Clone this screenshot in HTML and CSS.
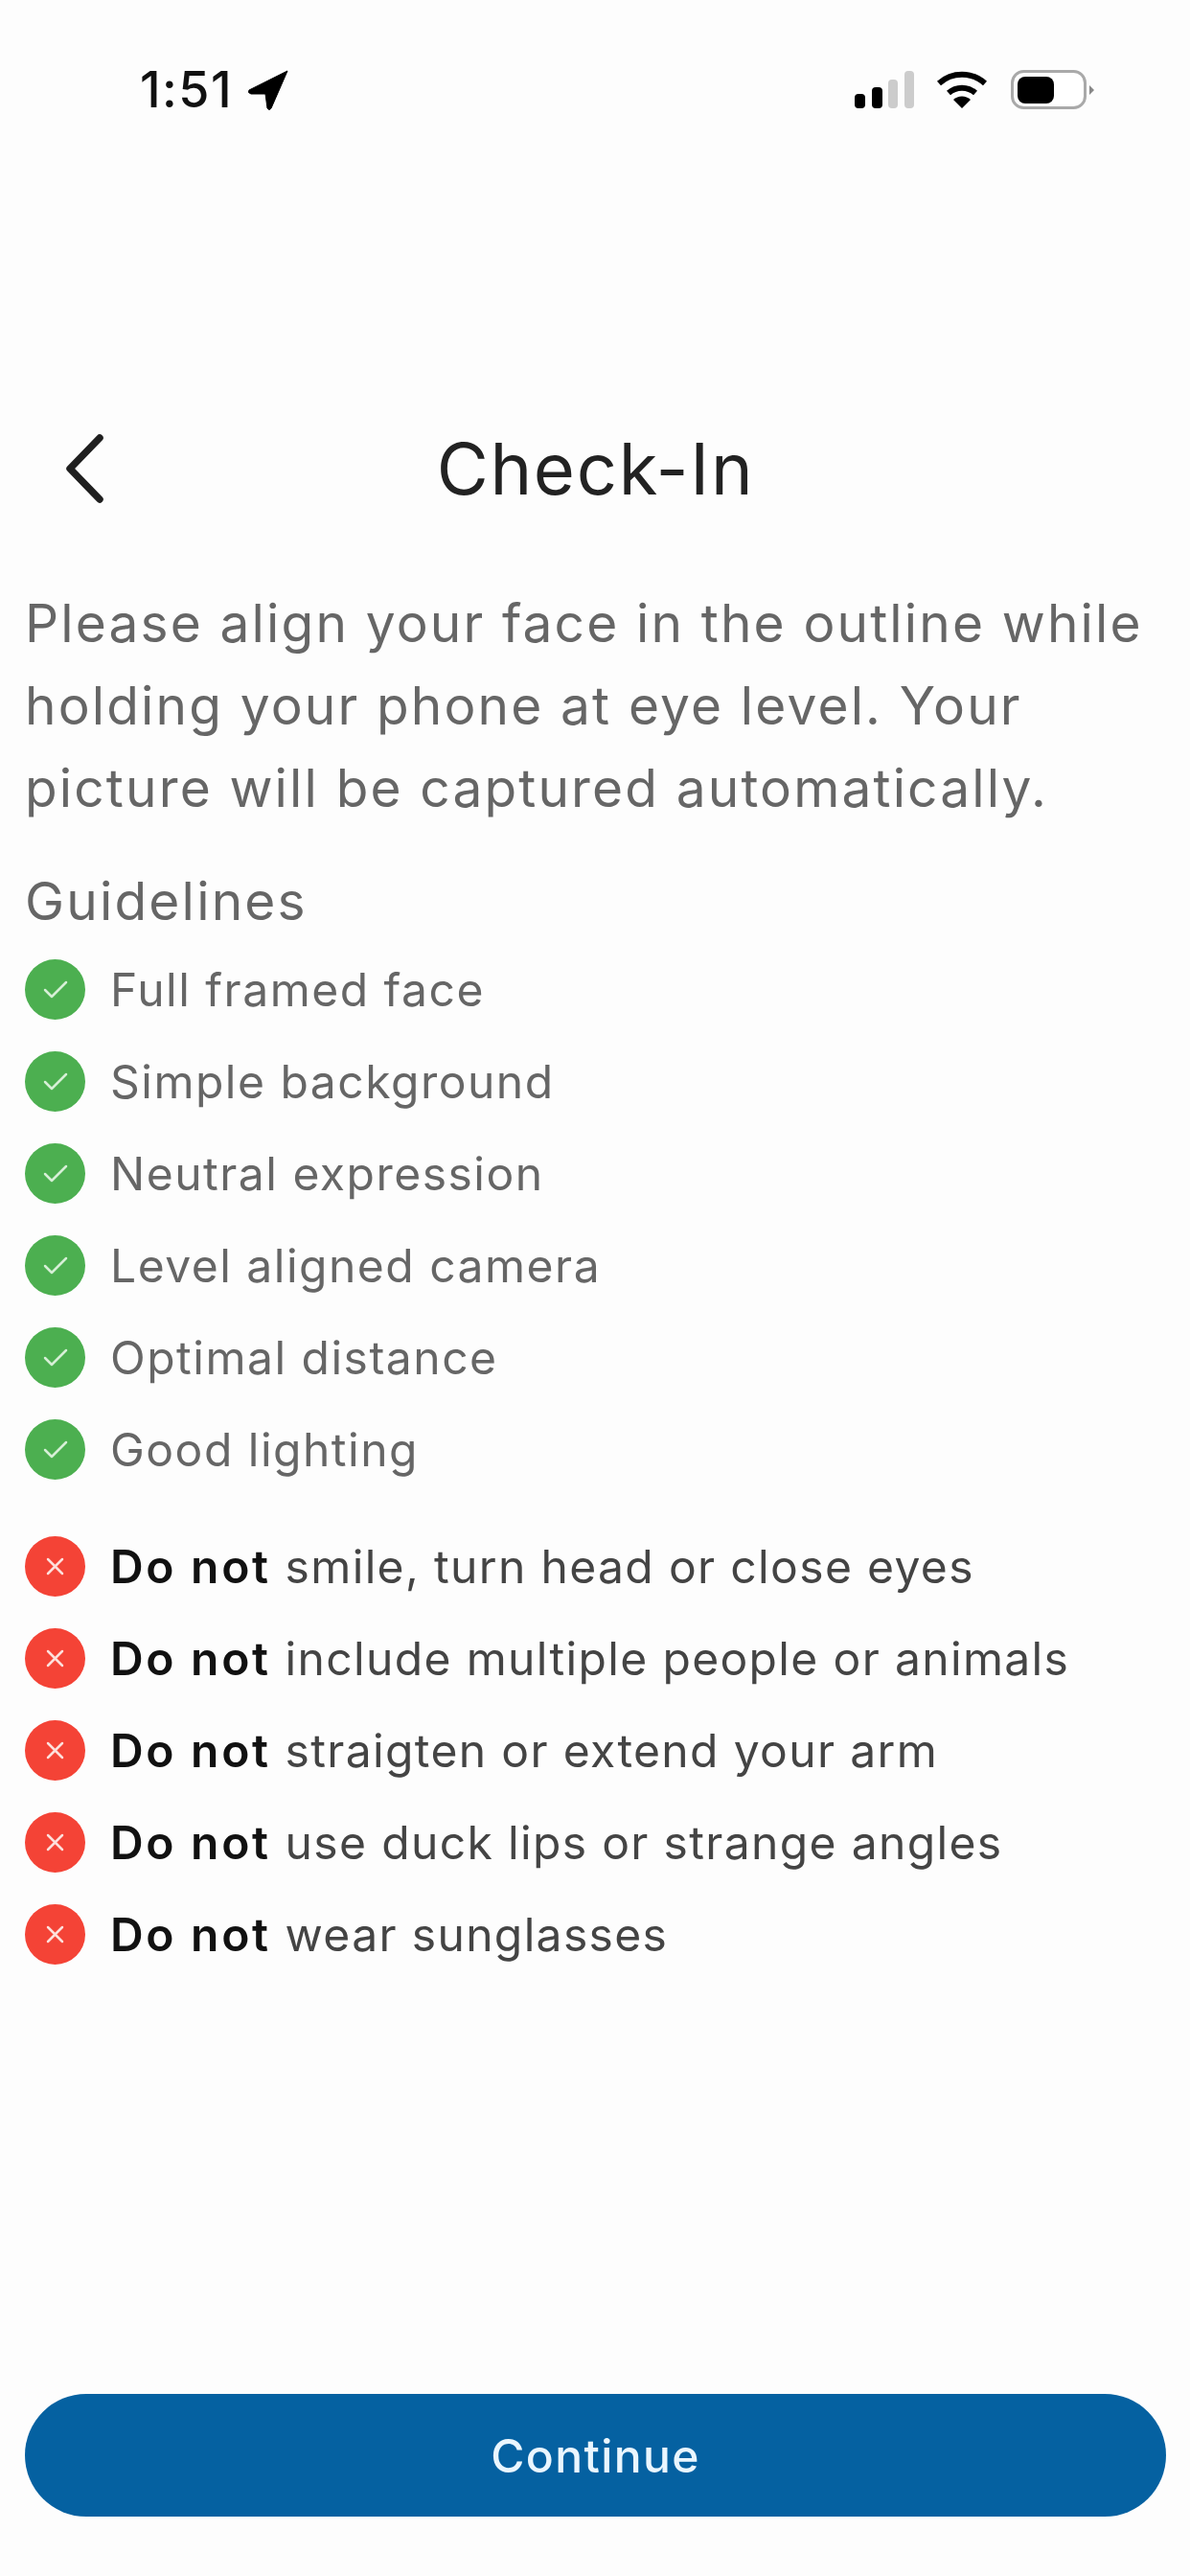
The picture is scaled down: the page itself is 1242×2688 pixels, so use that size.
FILE: index.html
```html
<!DOCTYPE html>
<html lang="en">
<head>
<meta charset="utf-8">
<title>Check-In</title>
<link rel="stylesheet" href="styles.css">
</head>
<body>
<main class="screen">
  <div class="status">
    <div class="status-left">
      <span class="time">1:51</span>
      <svg class="arrow" viewBox="0 0 42 42"><path d="M41 1 L1 21 Q-1 24 3 25 L18 25 L20 40 Q22 43 24 40 Z" fill="#000" stroke="#000" stroke-width="1" stroke-linejoin="round"/></svg>
    </div>
    <div class="status-right">
      <svg class="signal" viewBox="0 0 62 40"><rect x="0" y="24" width="11" height="15" rx="4" fill="#000"/><rect x="18" y="17" width="11" height="22" rx="4" fill="#000"/><rect x="35" y="9" width="10" height="30" rx="4" fill="#ccc"/><rect x="52" y="0" width="10" height="39" rx="4" fill="#ccc"/></svg>
      <svg class="wifi" viewBox="0 0 54 40"><path d="M3 13 A36 36 0 0 1 51 13" fill="none" stroke="#000" stroke-width="6" stroke-linecap="butt"/><path d="M13 23 A21 21 0 0 1 41 23" fill="none" stroke="#000" stroke-width="6"/><path d="M18 30 A13 13 0 0 1 36 30 L27 39 Z" fill="#000"/></svg>
      <svg class="battery" viewBox="0 0 88 42"><rect x="1.5" y="1.5" width="76" height="38" rx="12" fill="#fff" stroke="#a9a9a9" stroke-width="3"/><rect x="7" y="7" width="38" height="28" rx="8" fill="#000"/><path d="M82 16 L87 21 L82 26 Z" fill="#888"/></svg>
    </div>
  </div>

  <header class="nav">
    <svg class="back" viewBox="0 0 40 72"><path d="M36 4 L5 36 L36 68" fill="none" stroke="#1f1f1f" stroke-width="7.5" stroke-linecap="round" stroke-linejoin="round"/></svg>
    <h1 class="title">Check-In</h1>
  </header>

  <p class="intro">Please align your face in the outline while holding your phone at eye level. Your picture will be captured automatically.</p>

  <h2 class="subhead">Guidelines</h2>

  <ul class="list list-do">
    <li class="row"><svg class="badge" viewBox="0 0 63 63"><circle cx="31.5" cy="31.5" r="31.5" fill="#4caf50"/><path d="M21 32 L28 39 L43 24" class="mark"/></svg><span>Full framed face</span></li>
    <li class="row"><svg class="badge" viewBox="0 0 63 63"><circle cx="31.5" cy="31.5" r="31.5" fill="#4caf50"/><path d="M21 32 L28 39 L43 24" class="mark"/></svg><span>Simple background</span></li>
    <li class="row"><svg class="badge" viewBox="0 0 63 63"><circle cx="31.5" cy="31.5" r="31.5" fill="#4caf50"/><path d="M21 32 L28 39 L43 24" class="mark"/></svg><span>Neutral expression</span></li>
    <li class="row"><svg class="badge" viewBox="0 0 63 63"><circle cx="31.5" cy="31.5" r="31.5" fill="#4caf50"/><path d="M21 32 L28 39 L43 24" class="mark"/></svg><span>Level aligned camera</span></li>
    <li class="row"><svg class="badge" viewBox="0 0 63 63"><circle cx="31.5" cy="31.5" r="31.5" fill="#4caf50"/><path d="M21 32 L28 39 L43 24" class="mark"/></svg><span>Optimal distance</span></li>
    <li class="row"><svg class="badge" viewBox="0 0 63 63"><circle cx="31.5" cy="31.5" r="31.5" fill="#4caf50"/><path d="M21 32 L28 39 L43 24" class="mark"/></svg><span>Good lighting</span></li>
  </ul>

  <ul class="list list-dont">
    <li class="row"><svg class="badge" viewBox="0 0 63 63"><circle cx="31.5" cy="31.5" r="31.5" fill="#f44336"/><path d="M24 24 L39 39 M39 24 L24 39" class="mark"/></svg><span><b>Do not</b> smile, turn head or close eyes</span></li>
    <li class="row"><svg class="badge" viewBox="0 0 63 63"><circle cx="31.5" cy="31.5" r="31.5" fill="#f44336"/><path d="M24 24 L39 39 M39 24 L24 39" class="mark"/></svg><span><b>Do not</b> include multiple people or animals</span></li>
    <li class="row"><svg class="badge" viewBox="0 0 63 63"><circle cx="31.5" cy="31.5" r="31.5" fill="#f44336"/><path d="M24 24 L39 39 M39 24 L24 39" class="mark"/></svg><span><b>Do not</b> straigten or extend your arm</span></li>
    <li class="row"><svg class="badge" viewBox="0 0 63 63"><circle cx="31.5" cy="31.5" r="31.5" fill="#f44336"/><path d="M24 24 L39 39 M39 24 L24 39" class="mark"/></svg><span><b>Do not</b> use duck lips or strange angles</span></li>
    <li class="row"><svg class="badge" viewBox="0 0 63 63"><circle cx="31.5" cy="31.5" r="31.5" fill="#f44336"/><path d="M24 24 L39 39 M39 24 L24 39" class="mark"/></svg><span><b>Do not</b> wear sunglasses</span></li>
  </ul>

  <button class="cta" type="button">Continue</button>
</main>
</body>
</html>
```
FILE: styles.css
```css
* { box-sizing: border-box; }
html, body { margin: 0; padding: 0; }
body { background: #fdfdfd; font-family: Inter, "Liberation Sans", sans-serif; }
.screen { width: 1242px; height: 2688px; display: flex; flex-direction: column; padding: 0 25px 62px 26px; overflow: hidden; filter: blur(0.7px); }

.status { height: 72px; margin-top: 58px; display: flex; justify-content: space-between; align-items: center; padding: 0 0 0 120px; }
.status-left { display: flex; align-items: center; gap: 16px; }
.time { font-size: 52px; font-weight: 500; line-height: 1; color: #111; letter-spacing: 1.5px; }
.arrow { width: 42px; height: 42px; }
.status-right { display: flex; align-items: center; padding-right: 74px; }
.signal { width: 62px; height: 40px; margin-right: 23px; }
.wifi { width: 54px; height: 40px; margin-right: 24px; }
.battery { width: 88px; height: 42px; }

.nav { position: relative; height: 120px; margin-top: 300px; display: flex; justify-content: center; align-items: center; }
.back { position: absolute; left: 42px; top: 23px; width: 40px; height: 72px; }
.title { margin: 0 0 2px; font-size: 74px; font-weight: 400; color: #222; letter-spacing: 1.7px; }

.intro { margin: 57px 0 0; font-size: 55px; line-height: 86px; letter-spacing: 2.15px; color: #666; font-weight: 400; }
.subhead { margin: 32px 0 0; font-size: 55px; line-height: 86px; letter-spacing: 2.2px; font-weight: 400; color: #666; }

.list { list-style: none; margin: 0; padding: 0; }
.list-do { margin-top: 1px; color: #666; }
.list-dont { margin-top: 26px; color: #444; }
.row { height: 96px; display: flex; align-items: center; gap: 26px; font-size: 48px; letter-spacing: 1.5px; }
.list-dont .row { letter-spacing: 1.35px; }
.row b { font-weight: 600; color: #111; letter-spacing: 2.7px; }
.badge { width: 63px; height: 63px; flex: none; }
.mark { fill: none; stroke: #d6efd6; stroke-width: 2.5; stroke-linecap: round; stroke-linejoin: round; }
.list-dont .mark { stroke: #fde0dc; }

.cta { margin-top: auto; width: 1191px; height: 128px; border: 0; border-radius: 64px; background: #0561a1; color: #eaf6ff; font-family: inherit; font-size: 48px; font-weight: 500; letter-spacing: 1.4px; }
```
